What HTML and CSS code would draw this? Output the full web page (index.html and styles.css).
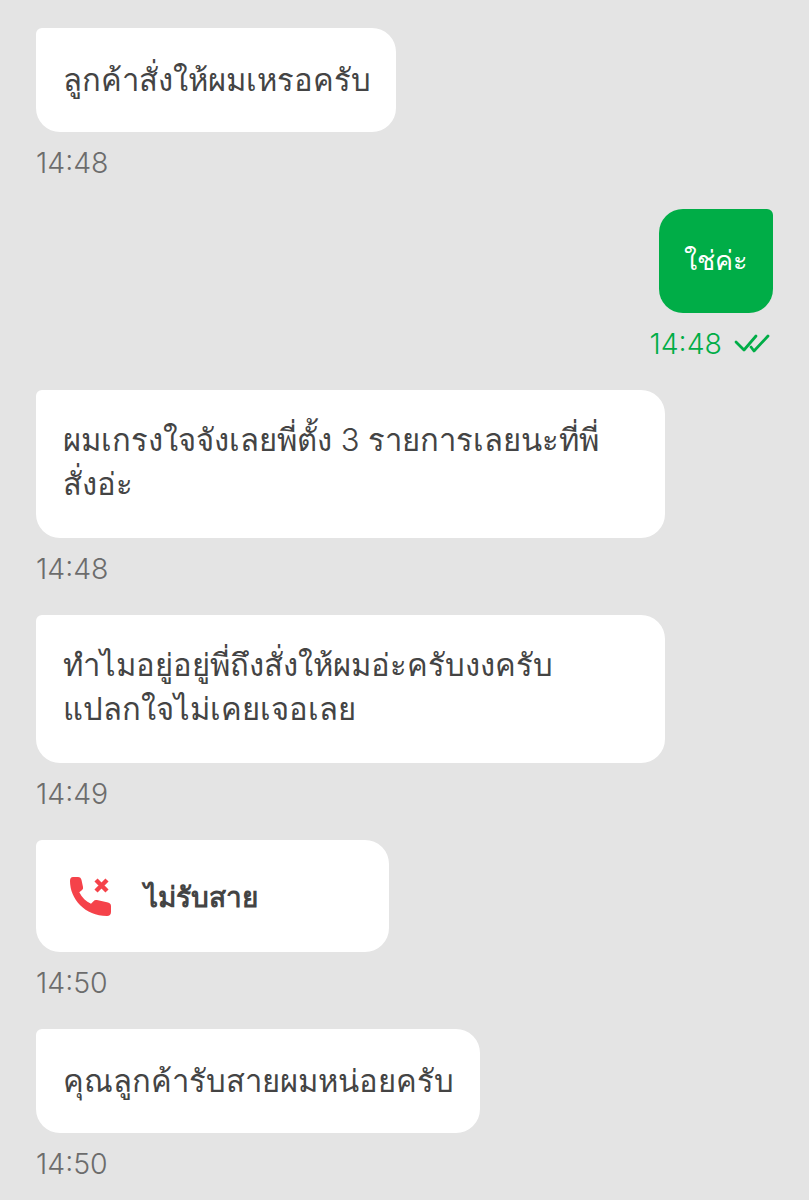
FILE: index.html
```html
<!DOCTYPE html>
<html lang="th">
<head>
    <meta charset="UTF-8">
    <meta name="viewport" content="width=device-width, initial-scale=1.0">
    <title>Chat</title>
    <link rel="stylesheet" href="styles.css">
</head>
<body>
    <div class="chat">
        <div class="bubble bubble-1">ลูกค้าสั่งให้ผมเหรอครับ</div>
        <div class="time">14:48</div>

        <div class="bubble bubble-own">ใช่ค่ะ</div>
        <div class="time time-own">
            14:48
            <svg class="ticks" width="36" height="20" viewBox="0 0 36 20" fill="none" stroke="#00ad47" stroke-width="2.8" stroke-linecap="round" stroke-linejoin="round">
                <path d="M2 8l8 8L22 2"/>
                <path d="M17 13l3 4L34 2"/>
            </svg>
        </div>

        <div class="bubble bubble-wide">ผมเกรงใจจังเลยพี่ตั้ง 3 รายการเลยนะที่พี่<br>สั่งอ่ะ</div>
        <div class="time">14:48</div>

        <div class="bubble bubble-wide">ทำไมอยู่อยู่พี่ถึงสั่งให้ผมอ่ะครับงงครับ<br>แปลกใจไม่เคยเจอเลย</div>
        <div class="time">14:49</div>

        <div class="bubble bubble-call">
            <svg class="call-icon" width="48" height="44" viewBox="0 0 48 44">
                <path fill="#f5424a" d="M10 3H15C17 3 18 4 18.500 6L20 13C20.300 14.500 19.800 15.500 18.800 16.200L16.300 18.200C19 23.500 23 27.500 28 29.700L30.500 27.200C31.300 26.200 32.500 25.800 33.900 26.100L44 28.300C46.500 28.900 48 30 48 32V38C48 40.500 46.500 42 44 42C22 42 7 25 7 7C7 4.500 8 3 10 3Z"/>
                <path stroke="#f5424a" stroke-width="4.400" d="M33 6l11 11M44 6L33 17"/>
            </svg>
            <span class="call-label">ไม่รับสาย</span>
        </div>
        <div class="time">14:50</div>

        <div class="bubble bubble-last">คุณลูกค้ารับสายผมหน่อยครับ</div>
        <div class="time">14:50</div>
    </div>
</body>
</html>
```

FILE: styles.css
```css
body {
    margin: 0;
    background: #e4e4e4;
    font-family: "Inter", "Noto Sans", "Liberation Sans", sans-serif;
    overflow: hidden;
}

.chat {
    display: flex;
    flex-direction: column;
    align-items: flex-start;
    padding: 28px 36px 0;
}

.bubble {
    box-sizing: border-box;
    flex-shrink: 0;
    background: #fff;
    color: #444;
    font-size: 31px;
    font-weight: 300;
    line-height: 44px;
    padding: 30px 27px 29px;
    border-radius: 6px 24px 24px 24px;
    white-space: nowrap;
}

.bubble-1 {
    width: 360px;
    height: 104px;
}

.bubble-own {
    align-self: flex-end;
    width: 114px;
    height: 104px;
    padding-left: 0;
    padding-right: 0;
    background: #00ad47;
    color: #fff;
    font-size: 27px;
    text-align: center;
    border-radius: 24px 6px 24px 24px;
}

.bubble-wide {
    width: 629px;
    height: 148px;
    padding-top: 28px;
}

.bubble-call {
    display: flex;
    align-items: center;
    width: 353px;
    height: 112px;
    padding: 0 27px;
}

.call-icon {
    margin-right: 33px;
}

.call-label {
    font-weight: 600;
    font-size: 28px;
    padding-top: 2px;
}

.bubble-last {
    width: 444px;
    height: 104px;
}

.time {
    color: #6c6c6c;
    font-size: 28.500px;
    font-weight: 300;
    line-height: 36px;
    margin-top: 13px;
    margin-bottom: 28px;
}

.time-own {
    align-self: flex-end;
    display: flex;
    align-items: center;
    gap: 12px;
    color: #00ad47;
}

.ticks {
    margin-right: 3px;
}
```
